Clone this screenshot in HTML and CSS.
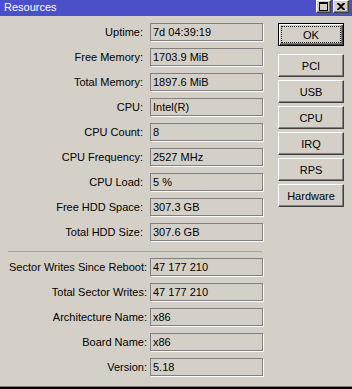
FILE: index.html
```html
<!DOCTYPE html>
<html lang="en">
<head>
    <meta charset="UTF-8">
    <meta name="viewport" content="width=device-width, initial-scale=1.0">
    <title>Resources</title>
    <link rel="stylesheet" href="styles.css">
</head>
<body>
    <div class="window">
        <div class="titlebar">
            <span class="title">Resources</span>
            <div class="caption-buttons">
                <span class="cap-btn">
                    <svg width="9" height="9" viewBox="0 0 9 9"><rect x="0.5" y="0.5" width="8" height="8" fill="none" stroke="#000"/><rect x="0" y="0" width="9" height="2" fill="#000"/></svg>
                </span>
                <span class="cap-btn">
                    <svg width="8" height="7" viewBox="0 0 8 7"><path d="M0 0h2l2 2 2-2h2v1L5 3.5 8 6v1H6L4 5 2 7H0V6l3-2.5L0 1z" fill="#000"/></svg>
                </span>
            </div>
        </div>

        <div class="content">
            <div class="form">
                <div class="grid top">
                    <label>Uptime:</label><div class="field">7d 04:39:19</div>
                    <label>Free Memory:</label><div class="field">1703.9 MiB</div>
                    <label>Total Memory:</label><div class="field">1897.6 MiB</div>
                    <label>CPU:</label><div class="field">Intel(R)</div>
                    <label>CPU Count:</label><div class="field">8</div>
                    <label>CPU Frequency:</label><div class="field">2527 MHz</div>
                    <label>CPU Load:</label><div class="field">5 %</div>
                    <label>Free HDD Space:</label><div class="field">307.3 GB</div>
                    <label>Total HDD Size:</label><div class="field">307.6 GB</div>
                </div>
                <div class="separator"></div>
                <div class="grid bottom">
                    <label>Sector Writes Since Reboot:</label><div class="field">47 177 210</div>
                    <label>Total Sector Writes:</label><div class="field">47 177 210</div>
                    <label>Architecture Name:</label><div class="field">x86</div>
                    <label>Board Name:</label><div class="field">x86</div>
                    <label>Version:</label><div class="field">5.18</div>
                </div>
            </div>

            <div class="actions">
                <button type="button" class="button default"><span class="focus">OK</span></button>
                <div class="button-list">
                    <button type="button" class="button">PCI</button>
                    <button type="button" class="button">USB</button>
                    <button type="button" class="button">CPU</button>
                    <button type="button" class="button">IRQ</button>
                    <button type="button" class="button">RPS</button>
                    <button type="button" class="button">Hardware</button>
                </div>
            </div>
        </div>
    </div>
</body>
</html>
```

FILE: styles.css
```css
html, body {
    margin: 0;
    padding: 0;
}

body {
    background: #d4d0c8;
    font-family: "Liberation Sans", Arial, sans-serif;
    font-size: 11px;
    color: #000;
}

.window {
    width: 352px;
    height: 389px;
    box-sizing: border-box;
    border-bottom: 2px solid #000;
    box-shadow: inset 0 -1px 0 #808080;
    overflow: hidden;
}

/* title bar */
.titlebar {
    height: 16px;
    background: #4b50c8;
    display: flex;
    align-items: flex-start;
    justify-content: space-between;
    padding: 0 3px 0 4px;
}

.title {
    color: #fff;
    font-size: 11px;
    line-height: 15px;
}

.caption-buttons {
    display: flex;
    gap: 2px;
}

.cap-btn {
    width: 15px;
    height: 13px;
    box-sizing: border-box;
    background: #d4d0c8;
    border: 1px solid;
    border-color: #fff #404040 #404040 #fff;
    box-shadow: inset -1px -1px 0 #808080;
    display: flex;
    align-items: center;
    justify-content: center;
}
.cap-btn + .cap-btn {
    width: 16px;
}

/* main area */
.content {
    display: flex;
    padding-top: 7px;
}

.form {
    width: 263px;
}

.grid {
    display: grid;
    grid-template-columns: 1fr 113px;
    row-gap: 7px;
}

.grid label {
    text-align: right;
    line-height: 18px;
    white-space: nowrap;
}
.top label {
    padding-right: 7px;
}
.bottom label {
    padding-right: 3px;
}

.field {
    height: 18px;
    box-sizing: border-box;
    border: 1px solid #808080;
    box-shadow: 1px 1px 0 #fff;
    padding: 0 2px;
    line-height: 16px;
    white-space: nowrap;
}

.separator {
    margin: 10px 1px 6px 8px;
    border-top: 1px solid #a8a59e;
}

/* buttons */
.actions {
    margin-left: 15px;
    width: 66px;
}

.button {
    display: block;
    width: 66px;
    height: 23px;
    padding: 0;
    margin: 0;
    box-sizing: border-box;
    background: #d4d0c8;
    border: 1px solid;
    border-color: #fff #404040 #404040 #fff;
    box-shadow: inset -1px -1px 0 #808080;
    font-family: inherit;
    font-size: 11px;
    color: #000;
}

.default {
    border: 1px solid #000;
    box-shadow: inset 1px 1px 0 #fff, inset -1px -1px 0 #404040, inset -2px -2px 0 #808080;
    padding: 3px;
}

.focus {
    display: flex;
    height: 100%;
    align-items: center;
    justify-content: center;
    outline: 1px dotted #000;
}

.button-list {
    display: flex;
    flex-direction: column;
    gap: 3px;
    margin-top: 8px;
}
```
